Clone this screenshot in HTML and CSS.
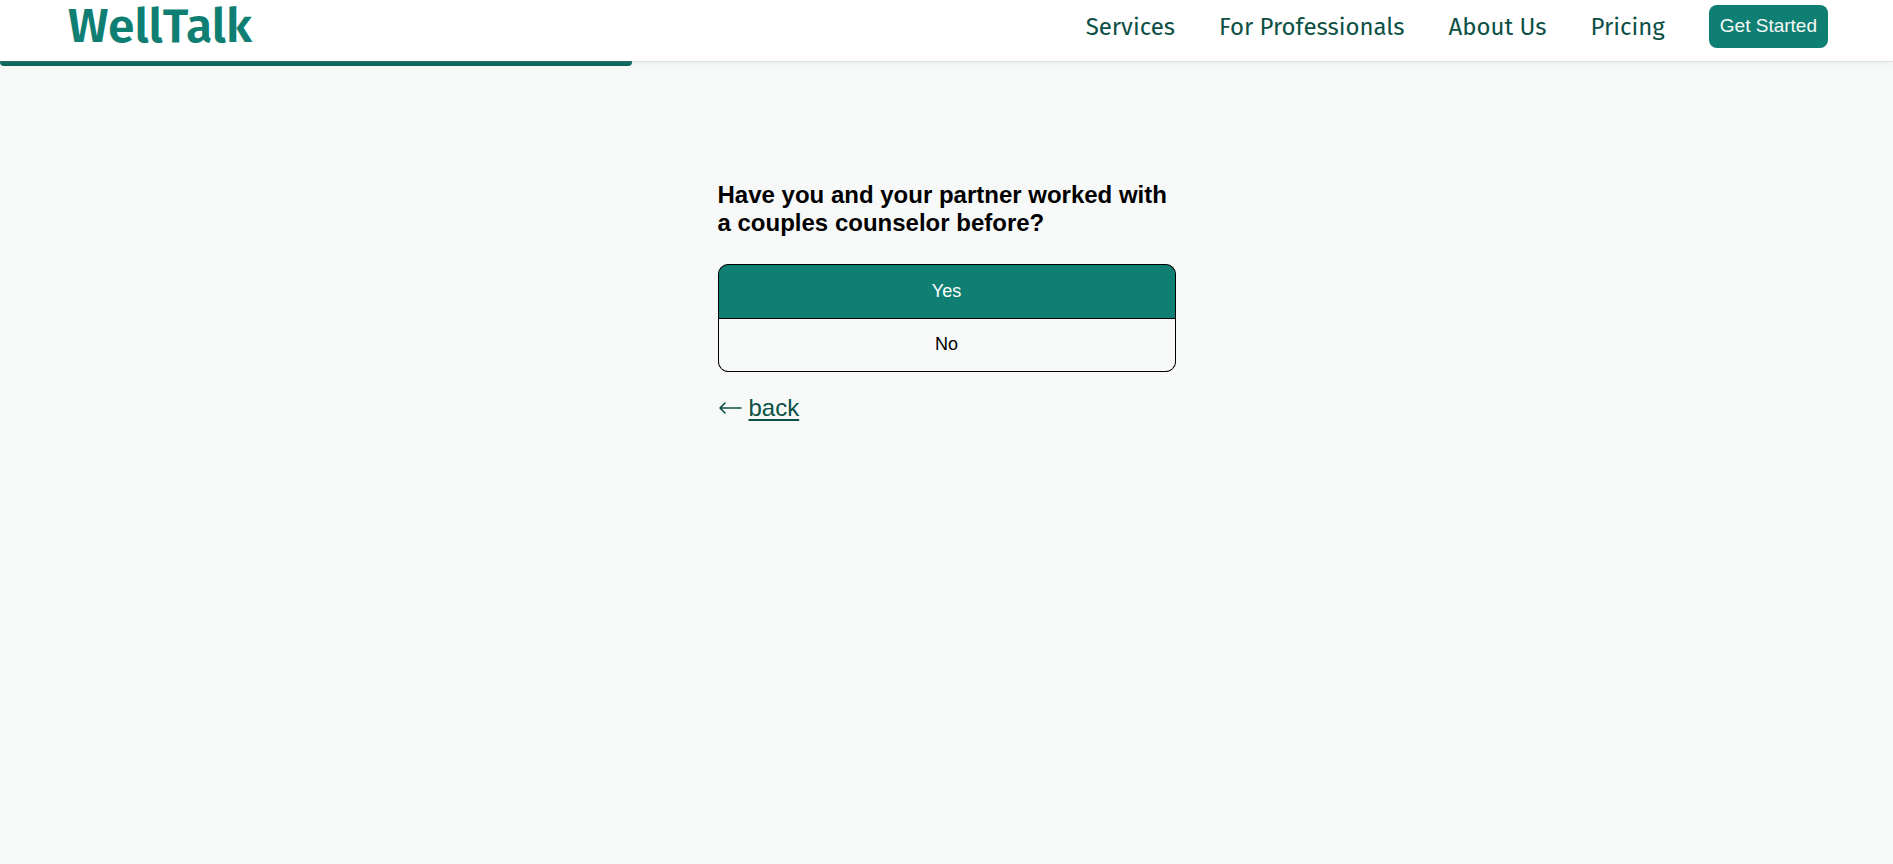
FILE: index.html
```html
<!DOCTYPE html>
<html lang="en">
<head>
  <meta charset="utf-8">
  <meta name="viewport" content="width=device-width, initial-scale=1">
  <title>WellTalk</title>
  <link rel="stylesheet" href="styles.css">
</head>
<body>
  <header class="site-header">
    <a class="logo" href="#">WellTalk</a>
    <nav class="nav" aria-label="Main">
      <a class="nav-link" href="#">Services</a>
      <a class="nav-link" href="#">For Professionals</a>
      <a class="nav-link" href="#">About Us</a>
      <a class="nav-link" href="#">Pricing</a>
      <button class="cta" type="button">Get Started</button>
    </nav>
  </header>
  <div class="progress" role="progressbar" aria-label="Questionnaire progress" aria-valuemin="0" aria-valuemax="3" aria-valuenow="1">
    <div class="progress-fill" style="width: 33.4%"></div>
  </div>
  <main class="question">
    <h1 class="question-title">Have you and your partner worked with a couples counselor before?</h1>
    <div class="options">
      <button class="option option-active" type="button">Yes</button>
      <button class="option" type="button">No</button>
    </div>
    <div class="back">
      <svg class="back-icon" viewBox="0 0 24 24" aria-hidden="true"><path d="M23 12H2M7 7l-5 5 5 5"/></svg>
      <a class="back-link" href="#">back</a>
    </div>
  </main>
</body>
</html>
```
FILE: styles.css
```css
* {
  box-sizing: border-box;
}

body {
  margin: 0;
  min-height: 100vh;
  background: #f7f9f8;
  color: #000;
  font-family: "Liberation Sans", Arial, sans-serif;
}

.site-header {
  display: flex;
  align-items: center;
  justify-content: space-between;
  height: 61px;
  padding: 0 65px 8px 68px;
  background: #fff;
  box-shadow: 0 1px 0 #dce2e0, 0 2px 8px rgba(15, 80, 68, 0.08);
}

.logo {
  padding-bottom: 2px;
  color: #107f73;
  font: 600 48px/48px "Fira Sans", "Noto Sans", sans-serif;
  text-decoration: none;
}

.nav {
  display: flex;
  align-items: center;
  gap: 44px;
}

.nav-link {
  color: #0c5045;
  font: 400 24px/32px "Fira Sans", "Noto Sans", sans-serif;
  text-decoration: none;
}

.cta {
  padding: 9px 11px 11px;
  border: 0;
  border-radius: 8px;
  background: #107f73;
  color: #f7f9f8;
  font: 19px/23px "Liberation Sans", Arial, sans-serif;
}

.progress {
  position: relative;
  height: 5px;
}

.progress-fill {
  height: 100%;
  border-radius: 0 0 4px 4px;
  background: linear-gradient(#2b6e65, #0f6b60 40%, #0f6156);
}

.question {
  width: 100%;
  max-width: 458px;
  margin: 0 auto;
  padding-top: 115px;
}

.question-title {
  margin: 0 0 27px;
  font-size: 24px;
  line-height: 28px;
}

.options {
  display: grid;
  grid-template-rows: 53px 52px;
  gap: 1px;
  overflow: hidden;
  border: 1px solid #000;
  border-radius: 10px;
  background: #000;
}

.option {
  padding: 0 0 2px;
  border: 0;
  background: #f7f9f8;
  color: #000;
  font: 18px/20px "Liberation Sans", Arial, sans-serif;
}

.option-active {
  background: #107f73;
  color: #fff;
}

.back {
  display: flex;
  align-items: center;
  gap: 7px;
  margin-top: 22px;
  color: #0c5045;
  font-size: 24px;
  line-height: 28px;
}

.back-icon {
  width: 24px;
  height: 24px;
  fill: none;
  stroke: currentColor;
  stroke-width: 1.6;
  stroke-linecap: round;
  stroke-linejoin: round;
}

.back-link {
  color: inherit;
  text-decoration-thickness: 2px;
  text-underline-offset: 3px;
}
```
